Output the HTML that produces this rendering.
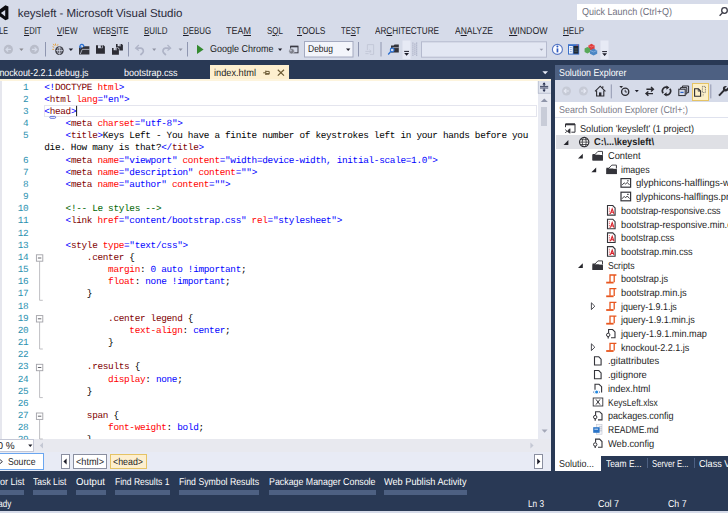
<!DOCTYPE html>
<html><head><meta charset="utf-8"><title>keysleft - Microsoft Visual Studio</title>
<style>
*{margin:0;padding:0;box-sizing:border-box}
html,body{text-rendering:geometricPrecision;width:728px;height:513px;overflow:hidden;background:#d6dbe9;font-family:"Liberation Sans",sans-serif;color:#1e1e1e}
.a{position:absolute;white-space:pre}
.t u{text-decoration:underline;text-underline-offset:1px}
.c{font-family:"Liberation Mono",monospace;font-size:9.4px;letter-spacing:-0.311px;line-height:12.15px;height:12.15px;color:#000}
.ln{color:#2b91af;left:0;width:28.3px;text-align:right}
.cd{left:44.3px}
.b{color:#00f}.r{color:#f00}.m{color:#800000}.g{color:#006400}
svg{position:absolute;overflow:visible}
</style></head><body>
<div class="a" style="left:0;top:0;width:728px;height:60px;background:#d6dbe9"></div>
<div class="a" style="left:577px;top:4px;width:151px;height:16px;background:#fff"></div>
<div class="a" style="left:0;top:59.7px;width:728px;height:453px;background:#293955"></div>
<div class="a" style="left:0;top:511.4px;width:728px;height:2px;background:#d6dbe9"></div>
<!-- editor -->
<div class="a" style="left:0;top:79px;width:551px;height:391.7px;background:#fff"></div>
<div class="a" style="left:0;top:79px;width:2px;height:360px;background:#e6e7ee"></div>
<div class="a" style="left:210px;top:65px;width:79px;height:14px;background:#fdefcf"></div>
<div class="a" style="left:43.5px;top:105.4px;width:493px;height:11.4px;border:1px solid #e4e5ee"></div>
<div class="a" style="left:0;top:79px;width:551px;height:1.8px;background:#fdf4dd"></div>
<!-- vscroll -->
<div class="a" style="left:538px;top:81px;width:13px;height:358px;background:#e8eaf2"></div>
<div class="a" style="left:541.2px;top:107px;width:6.2px;height:19px;background:#c8ccd8"></div>
<!-- hscroll row -->
<div class="a" style="left:0;top:439px;width:551px;height:13px;background:#e8e9ef"></div>
<div class="a" style="left:0;top:439px;width:34px;height:13px;background:#fff;border:1px solid #c5c8d6;border-left:0"></div>
<!-- source row -->
<div class="a" style="left:0;top:452px;width:551px;height:18.7px;background:#e8ebf5"></div>
<div class="a" style="left:-1px;top:453.4px;width:44.8px;height:16.2px;background:#fff;border:1.2px solid #6aa6f0"></div>
<div class="a" style="left:60.5px;top:454px;width:9.5px;height:15px;background:#fff;border:1px solid #8a8fa0"></div>
<div class="a" style="left:73px;top:454px;width:34px;height:15px;background:#fff;border:1px solid #8a8fa0"></div>
<div class="a" style="left:109.5px;top:454px;width:37px;height:15px;background:#fdefcf;border:1px solid #e5c365"></div>
<div class="a" style="left:534px;top:454px;width:9px;height:15px;background:#fff;border:1px solid #8a8fa0"></div>
<!-- solution explorer -->
<div class="a" style="left:555px;top:65px;width:173px;height:15px;background:#4d6082"></div>
<div class="a" style="left:555px;top:80px;width:173px;height:22px;background:#d6dbe9"></div>
<div class="a" style="left:555.2px;top:102px;width:172.8px;height:353.8px;background:#fff"></div>
<div class="a" style="left:555px;top:117px;width:173px;height:1px;background:#dfe2ee"></div>
<div class="a" style="left:555.5px;top:134.8px;width:172.5px;height:13.9px;background:#dfe0e5"></div>
<div class="a" style="left:691.5px;top:83px;width:17px;height:17.5px;background:#fdf0c8;border:1px solid #e5c365"></div>
<div class="a" style="left:555.2px;top:455px;width:45.8px;height:15.6px;background:#fff"></div>
<div class="a" style="left:647px;top:458px;width:1px;height:10px;background:#4d6082"></div>
<div class="a" style="left:694px;top:458px;width:1px;height:10px;background:#4d6082"></div>
<svg class="a" style="left:0;top:0" width="728" height="513" viewBox="0 0 728 513">
<!-- VS logo -->
<path d="M-3,11.6 L5.4,5.3 L8.4,6.6 L8.4,19 L5.4,20.3 L-3,14.2 Z M0.9,13.1 L5.2,9.9 L5.2,16.4 Z" fill="#0c0c10" fill-rule="evenodd"/>
<!-- quick launch magnifier -->
<g stroke="#3a3a46" stroke-width="1.3" fill="none"><circle cx="724.5" cy="10.5" r="2.8"/><path d="M722.6,12.6 L719.6,15.8"/></g>
<!-- toolbar: back / fwd -->
<g id="tb-nav">
<circle cx="8.4" cy="49.4" r="4.6" fill="#b9bdca"/><path d="M10.9,49.4 H6.2 M8.2,47.3 L6,49.4 L8.2,51.5" stroke="#d6dbe9" stroke-width="1.1" fill="none"/>
<path d="M19.3,48.6 h4.2 l-2.1,2.3 z" fill="#8a8a90"/>
<circle cx="34.4" cy="49.4" r="4.6" fill="#b9bdca"/><path d="M31.9,49.4 H36.6 M34.6,47.3 L36.8,49.4 L34.6,51.5" stroke="#d6dbe9" stroke-width="1.1" fill="none"/>
</g>
<g stroke="#8f96b0" stroke-width="1"><path d="M45.5,42 V56.5"/><path d="M128.5,42 V56.5"/><path d="M187.5,42 V56.5"/><path d="M358.5,42 V56.5"/><path d="M381,42 V56.5"/></g>
<!-- new web site -->
<g><circle cx="59.4" cy="50.6" r="4.3" fill="#404048"/><path d="M59.4,47 V54.2 M55.8,50.6 H63 " stroke="#d6dbe9" stroke-width="0.8"/><ellipse cx="59.4" cy="50.6" rx="1.9" ry="3.4" fill="none" stroke="#d6dbe9" stroke-width="0.7"/>
<path d="M55.5,43.6 V45.4 M52.6,46.6 L54.2,47.4 M53.2,43.9 L54.4,45.6 M58,44.3 L56.9,45.8 M52.4,49.4 H54" stroke="#e79a28" stroke-width="0.9"/></g>
<path d="M68.7,48.6 h4.4 l-2.2,2.4 z" fill="#1e1e2a"/>
<!-- open -->
<g><path d="M79,54.6 V47.4 H82.5 L83.5,46.2 H89.4 V54.6 Z" fill="#33333a"/><path d="M80.3,54 L82.2,49.4 H89.6" stroke="#d6dbe9" stroke-width="0.7" fill="none"/>
<path d="M80.4,47.6 A1.9,1.9 0 1 1 83.6,47" stroke="#2a6fd0" stroke-width="1.3" fill="none"/><path d="M79,46.6 L80.5,48.9 L82,46.8 Z" fill="#2a6fd0"/></g>
<!-- save -->
<g><path d="M96,45.2 H103.6 L104.9,46.5 V53.8 H96 Z" fill="#2c2c34"/><rect x="98" y="45.2" width="4.6" height="3" fill="#d6dbe9"/><rect x="100.8" y="45.6" width="1.2" height="2.1" fill="#2c2c34"/></g>
<!-- save all -->
<g><path d="M116,44 H121.8 L122.9,45.1 V50.6 H116 Z" fill="#2c2c34"/><rect x="117.6" y="44" width="3.4" height="2.2" fill="#d6dbe9"/><rect x="119.7" y="44.3" width="0.9" height="1.5" fill="#2c2c34"/>
<path d="M111.4,47.4 H118.2 L119.4,48.6 V55 H111.4 Z" fill="#d6dbe9"/>
<path d="M112,48 H117.8 L118.9,49.1 V54.7 H112 Z" fill="#2c2c34"/><rect x="113.6" y="48" width="3.4" height="2.2" fill="#d6dbe9"/><rect x="115.7" y="48.3" width="0.9" height="1.5" fill="#2c2c34"/></g>
<!-- undo / redo (disabled) -->
<g fill="none" stroke="#aeb3c6" stroke-width="1.7"><path d="M136.5,48.2 H141 A2.9,2.9 0 0 1 142.6,53 L140.4,55"/><path d="M138.8,45 L135.6,48.2 L138.8,50.6" stroke-width="1.2"/>
<path d="M169.8,48.2 H165.3 A2.9,2.9 0 0 0 163.7,53 L165.9,55"/><path d="M167.5,45 L170.7,48.2 L167.5,50.6" stroke-width="1.2"/></g>
<path d="M152.2,48.6 h4 l-2,2.3 z" fill="#9094a4"/><path d="M178.6,48.6 h4 l-2,2.3 z" fill="#9094a4"/>
<!-- play -->
<path d="M197,44.7 L203.6,49.4 L197,54.1 Z" fill="#348a30"/>
<path d="M278,48.6 h4.2 l-2.1,2.4 z" fill="#1e1e2a"/>
<!-- browser icon -->
<g><rect x="290.6" y="46.2" width="7.4" height="6.6" fill="none" stroke="#3a3a44" stroke-width="1"/><rect x="290.6" y="45.9" width="7.4" height="1.4" fill="#3a3a44"/><circle cx="291.6" cy="51.2" r="2.7" fill="#7c7e88" stroke="#d6dbe9" stroke-width="0.6"/><circle cx="290.9" cy="50.6" r="1" fill="#b8bcc8"/></g>
<!-- Debug combo -->
<rect x="304.5" y="41.5" width="48.5" height="15.5" fill="#f3f5fb" stroke="#a4aac0" stroke-width="1"/>
<path d="M346,48.6 h4.4 l-2.2,2.4 z" fill="#1e1e2a"/>
<!-- disabled doc icon -->
<g fill="none" stroke="#c2c6d6" stroke-width="0.9"><path d="M367.4,50 V44.6 H373.6 V54.4 H370"/><path d="M365.4,51.4 H371 M369.4,49.8 L371.2,51.4 L369.4,53 M365.4,53.6 H368.6"/></g>
<!-- find in files -->
<g><path d="M391,52.6 V45.6 H393.6 L394.6,44.4 H398.8 V52.6 Z" fill="#33333a"/><path d="M392.6,47.6 H398.8" stroke="#d6dbe9" stroke-width="0.6"/>
<circle cx="392.2" cy="50" r="1.9" fill="#d6dbe9" stroke="#2a6fd0" stroke-width="1.1"/><path d="M390.8,51.6 L388.2,54.4" stroke="#2a6fd0" stroke-width="1.4"/></g>
<!-- overflow 1 -->
<rect x="402.5" y="40.5" width="8" height="18.5" fill="#e7eaf5"/>
<path d="M404.2,51.4 h4.8" stroke="#1e1e2a" stroke-width="1"/><path d="M404.2,53 h4.8 l-2.4,2.7 z" fill="#1e1e2a"/>
<!-- grip -->
<g fill="#9298b0"><rect x="412.4" y="42.6" width="1" height="1"/><rect x="414.4" y="43.6" width="1" height="1"/><rect x="416.2" y="42.6" width="1" height="1"/>
<rect x="412.4" y="44.6" width="1" height="1"/><rect x="414.4" y="45.6" width="1" height="1"/><rect x="416.2" y="44.6" width="1" height="1"/>
<rect x="412.4" y="46.6" width="1" height="1"/><rect x="414.4" y="47.6" width="1" height="1"/><rect x="416.2" y="46.6" width="1" height="1"/>
<rect x="412.4" y="48.6" width="1" height="1"/><rect x="414.4" y="49.6" width="1" height="1"/><rect x="416.2" y="48.6" width="1" height="1"/>
<rect x="412.4" y="50.6" width="1" height="1"/><rect x="414.4" y="51.6" width="1" height="1"/><rect x="416.2" y="50.6" width="1" height="1"/>
<rect x="412.4" y="52.6" width="1" height="1"/><rect x="414.4" y="53.6" width="1" height="1"/><rect x="416.2" y="52.6" width="1" height="1"/>
<rect x="412.4" y="54.6" width="1" height="1"/><rect x="416.2" y="54.6" width="1" height="1"/></g>
<!-- empty combo -->
<rect x="421.5" y="41.8" width="125" height="15.4" fill="#e3e7f3" stroke="#b5bace" stroke-width="1"/>
<path d="M539.6,48.8 h3.6 l-1.8,2 z" fill="#9a9eb0"/>
<!-- info -->
<circle cx="557.4" cy="49.4" r="5" fill="#fdfdff" stroke="#5878c4" stroke-width="1.1"/><rect x="556.6" y="48.4" width="1.7" height="4" fill="#2c58c0"/><circle cx="557.4" cy="46.6" r="1" fill="#2c58c0"/>
<!-- window icon -->
<g><rect x="568" y="44.2" width="11.2" height="10.4" fill="#3a70c8"/><rect x="569" y="46" width="3.8" height="7.6" fill="#f2f5fc"/><rect x="573.6" y="46" width="4.8" height="7.6" fill="#23282e"/><path d="M569.8,47.6 h2 M569.8,49.6 h2 M569.8,51.6 h2" stroke="#7c9cd8" stroke-width="0.8"/><path d="M574.4,49 h3.2 M574.4,51.2 h3.2" stroke="#4a6a78" stroke-width="0.8"/><rect x="576.4" y="44.8" width="1.6" height="0.8" fill="#e04848"/></g>
<!-- cubes -->
<g><path d="M588.4,45.4 L591.4,43.8 L594.6,45.4 V49.4 L591.4,51 L588.4,49.4 Z" fill="#e03c3c"/><path d="M588.4,45.4 L591.4,47 L594.6,45.4" stroke="#f08a8a" stroke-width="0.6" fill="none"/>
<path d="M584.6,48.4 L587.4,47 L590.2,48.4 V52 L587.4,53.4 L584.6,52 Z" fill="#58a858"/>
<path d="M590,50.4 L593.6,48.6 L597.2,50.4 V53.8 L593.6,55.4 L590,53.8 Z" fill="#4a86c4"/><path d="M590,50.4 L593.6,52 L597.2,50.4" stroke="#9cc0e8" stroke-width="0.6" fill="none"/></g>
<!-- overflow 2 -->
<rect x="600.5" y="40.5" width="8" height="18.5" fill="#e7eaf5"/>
<path d="M602.2,51.6 h4.8" stroke="#1e1e2a" stroke-width="1"/><path d="M602.2,53.2 h4.8 l-2.4,2.7 z" fill="#1e1e2a"/>
</svg>
<svg class="a" style="left:0;top:0" width="728" height="513" viewBox="0 0 728 513">
<g stroke="#6b5a34" stroke-width="1" fill="none"><path d="M263.2,72.8 H265.8 M265.8,70.6 V75 M265.8,71.4 H269.2 V74.2 H265.8 M265.8,73.6 H269.2"/><path d="M277.8,69.8 L284,75.6 M284,69.8 L277.8,75.6" stroke-width="1.2"/></g>
<path d="M542.4,71.3 h5.6 l-2.8,3 z" fill="#e8ecf8"/>
<rect x="538" y="81" width="12.7" height="12.5" fill="#dfe3ee"/><path d="M538,93.3 H550.7 M538.3,81 V93.5" stroke="#b4bacb" stroke-width="0.8"/>
<g stroke="#2a3250" fill="none"><path d="M540,86.4 H548.2 M540,88 H548.2" stroke-width="0.9"/><path d="M544.1,83 V86 M544.1,88.4 V91.2" stroke-width="1.1"/></g><path d="M542.4,84.4 L544.1,82.2 L545.8,84.4 Z M542.4,89.8 L544.1,92 L545.8,89.8 Z" fill="#2a3250"/>
<path d="M540.8,102 L544.3,98.4 L547.8,102 Z" fill="#9096aa"/>
<path d="M541.6,429.4 L544.6,432.8 L547.6,429.4 Z" fill="#a4a8b8"/>
<path d="M43,442.4 L39.8,445.4 L43,448.4 Z" fill="#c4c8d4"/>
<path d="M530.4,442.4 L533.6,445.4 L530.4,448.4 Z" fill="#c4c8d4"/>
<path d="M28.2,444.6 h4.2 l-2.1,2.3 z" fill="#1e1e2a"/>
<path d="M66.6,458.6 L63.4,461.6 L66.6,464.6 Z" fill="#1e1e2a"/>
<path d="M537.2,458.6 L540.4,461.6 L537.2,464.6 Z" fill="#1e1e2a"/>
<path d="M0,459.6 L2.4,461.6 L0,463.6" stroke="#3a3a44" stroke-width="1" fill="none"/>
<path d="M39.6,261.3 V300.3 H42.8" stroke="#b8b8bc" stroke-width="0.9" fill="none"/>
<rect x="36.4" y="254.8" width="6.4" height="6.4" fill="#fff" stroke="#a2a2a8" stroke-width="0.9"/><path d="M37.9,258.0 h3.4" stroke="#55555c" stroke-width="0.9"/>
<path d="M39.6,322.1 V349.0 H42.8" stroke="#b8b8bc" stroke-width="0.9" fill="none"/>
<rect x="36.4" y="315.6" width="6.4" height="6.4" fill="#fff" stroke="#a2a2a8" stroke-width="0.9"/><path d="M37.9,318.8 h3.4" stroke="#55555c" stroke-width="0.9"/>
<path d="M39.6,370.8 V397.6 H42.8" stroke="#b8b8bc" stroke-width="0.9" fill="none"/>
<rect x="36.4" y="364.3" width="6.4" height="6.4" fill="#fff" stroke="#a2a2a8" stroke-width="0.9"/><path d="M37.9,367.5 h3.4" stroke="#55555c" stroke-width="0.9"/>
<path d="M39.6,419.5 V439.0 H42.8" stroke="#b8b8bc" stroke-width="0.9" fill="none"/>
<rect x="36.4" y="413.0" width="6.4" height="6.4" fill="#fff" stroke="#a2a2a8" stroke-width="0.9"/><path d="M37.9,416.2 h3.4" stroke="#55555c" stroke-width="0.9"/>
<rect x="49.8" y="116.4" width="5.8" height="1.9" rx="0.9" fill="#fff" stroke="#3a4ed0" stroke-width="0.8"/>
<path d="M76.6,105.8 V116.2" stroke="#000" stroke-width="0.9"/>
<circle cx="566.5" cy="91" r="4.5" fill="#c6cad6"/><path d="M568.9,91 H564.4 M566.3,89 L564.2,91 L566.3,93" stroke="#e6e9f4" stroke-width="1.1" fill="none"/>
<circle cx="583.4" cy="91" r="4.5" fill="#c6cad6"/><path d="M581,91 H585.5 M583.6,89 L585.7,91 L583.6,93" stroke="#e6e9f4" stroke-width="1.1" fill="none"/>
<g stroke="#2a2a30" fill="none" stroke-width="1.1"><path d="M595,91.4 L600.2,86.2 L605.4,91.4"/><path d="M596.6,90.4 V96 H603.8 V90.4"/><path d="M602.8,88 V86.2"/></g><rect x="599" y="92.4" width="2.4" height="3.6" fill="#2a2a30"/>
<path d="M611.3,84.4 V98.4 M710.8,84.4 V98.4" stroke="#9298b0" stroke-width="1"/>
<circle cx="625.2" cy="91.8" r="3.6" fill="none" stroke="#2a2a30" stroke-width="1.3"/><path d="M625.2,89.8 V92 H627.2" stroke="#2a2a30" stroke-width="0.9" fill="none"/><path d="M619.4,86 h3.6 l-1.8,2.2 z" fill="#2a2a30"/>
<path d="M634.8,90 h4 l-2,2.3 z" fill="#1e1e2a"/>
<g stroke="#2a2a30" stroke-width="1.4" fill="none"><path d="M646.4,89.2 H653.2 M651,87 L653.4,89.2 L651,91.4"/><path d="M653,93.6 H646.2 M648.4,91.4 L646,93.6 L648.4,95.8"/></g>
<g stroke="#2a2a30" stroke-width="1.6" fill="none"><path d="M663.2,93.2 A3.7,3.7 0 0 1 667.4,87.4"/><path d="M669.8,88.8 A3.7,3.7 0 0 1 665.6,94.6"/></g><path d="M666.4,85.6 L669.4,87.6 L666.4,89.8 Z M666.6,92.2 L663.6,94.4 L666.6,96.6 Z" fill="#2a2a30"/>
<g fill="none" stroke="#2a2a30" stroke-width="1"><path d="M682.4,87.4 V86 H688.6 V92.6 H687.2"/><path d="M680.6,89 V87.6 H686.8 V94 H685.6"/><rect x="678.8" y="89.2" width="6.4" height="6.4"/></g><path d="M680.4,92.4 h3.2" stroke="#2a62c8" stroke-width="1.2"/>
<path d="M694.6,88.8 H698.4 L700.6,91 V96.2 H694.6 Z" fill="none" stroke="#2a2a30" stroke-width="1.1"/><path d="M698.2,89 V91.2 H700.4" fill="none" stroke="#2a2a30" stroke-width="0.7"/><path d="M702.4,86.4 H705.4 V92.6 H702.4 Z" fill="none" stroke="#55555e" stroke-width="0.8" stroke-dasharray="1,0.8"/><path d="M703.2,94 V96 H701.8" stroke="#77777e" stroke-width="0.7" fill="none" stroke-dasharray="0.8,0.8"/>
<path d="M719,95.6 L724,90.4" stroke="#2a2a30" stroke-width="2" fill="none"/><circle cx="725.6" cy="88.8" r="2.7" fill="#2a2a30"/><path d="M725.4,88.8 L729,85.2" stroke="#d6dbe9" stroke-width="1.6"/>
<path d="M565.5,127.2 V124.0 H575.0 V132.2 H571.4" fill="none" stroke="#34343a" stroke-width="1"/><path d="M565.5,124.4 H575.0" stroke="#34343a" stroke-width="1.8"/>
<path d="M565.0,129.8 L567.0,131.2 L569.2,128.8 L570.4,128.4 V133.6 L569.2,133.2 Z" fill="#34343a"/>
<path d="M565.2,133.0 L567.0,131.2 L565.2,129.6" fill="none" stroke="#34343a" stroke-width="0.9"/>
<circle cx="584.2" cy="142.1" r="4.7" fill="#fff" stroke="#2e2e34" stroke-width="1.1"/><ellipse cx="584.2" cy="142.1" rx="2" ry="4.7" fill="none" stroke="#2e2e34" stroke-width="0.8"/><path d="M579.6,142.1 H588.8 M580.4,139.7 H588.0 M580.4,144.5 H588.0" stroke="#2e2e34" stroke-width="0.8"/>
<path d="M568.4,140.1 V144.9 H563.6 Z" fill="#26262c"/>
<path d="M592.5,160.2 V154.0 H602.9 V152.0 H602.9 L602.9,152.0 H602.9 Z" fill="#34343a"/>
<path d="M592.5,155.0 H602.9 V160.4 H592.5 Z" fill="#34343a"/>
<path d="M594.7,154.8 L597.9,151.4 H602.5 V154.8" fill="#fff" stroke="#34343a" stroke-width="0.9"/>
<path d="M592.5,160.4 L594.3,156.0 H602.9 V160.4 Z" fill="#34343a"/>
<path d="M582.8,153.8 V158.6 H578.0 Z" fill="#26262c"/>
<path d="M606.4,173.9 V167.7 H616.8 V165.7 H616.8 L616.8,165.7 H616.8 Z" fill="#34343a"/>
<path d="M606.4,168.7 H616.8 V174.1 H606.4 Z" fill="#34343a"/>
<path d="M608.6,168.5 L611.8,165.1 H616.4 V168.5" fill="#fff" stroke="#34343a" stroke-width="0.9"/>
<path d="M606.4,174.1 L608.2,169.7 H616.8 V174.1 Z" fill="#34343a"/>
<path d="M596.2,167.5 V172.3 H591.4 Z" fill="#26262c"/>
<rect x="621.0" y="178.6" width="9.6" height="8.6" fill="#fff" stroke="#34343a" stroke-width="1.2"/><path d="M622.0,185.2 L624.2,182.8 L625.6,184.2 L627.2,182.4 L629.6,185.0" fill="none" stroke="#34343a" stroke-width="0.9"/><rect x="627.2" y="180.2" width="1.4" height="1.2" fill="#34343a"/>
<rect x="621.0" y="192.2" width="9.6" height="8.6" fill="#fff" stroke="#34343a" stroke-width="1.2"/><path d="M622.0,198.8 L624.2,196.4 L625.6,197.8 L627.2,196.0 L629.6,198.6" fill="none" stroke="#34343a" stroke-width="0.9"/><rect x="627.2" y="193.8" width="1.4" height="1.2" fill="#34343a"/>
<path d="M607.5,205.5 H612.8 L615.1,207.9 V215.1 H607.5 Z" fill="#fff" stroke="#34343a" stroke-width="1.1"/>
<path d="M610.4,213.9 L612.2,208.9 L614.0,213.9 M611.0,212.3 H613.4" fill="none" stroke="#d8232c" stroke-width="1.1"/><path d="M609.4,207.7 V213.9" stroke="#d8232c" stroke-width="0.8" stroke-dasharray="0.9,0.9"/>
<path d="M607.5,219.2 H612.8 L615.1,221.6 V228.8 H607.5 Z" fill="#fff" stroke="#34343a" stroke-width="1.1"/>
<path d="M610.4,227.6 L612.2,222.6 L614.0,227.6 M611.0,226.0 H613.4" fill="none" stroke="#d8232c" stroke-width="1.1"/><path d="M609.4,221.4 V227.6" stroke="#d8232c" stroke-width="0.8" stroke-dasharray="0.9,0.9"/>
<path d="M607.5,232.9 H612.8 L615.1,235.3 V242.5 H607.5 Z" fill="#fff" stroke="#34343a" stroke-width="1.1"/>
<path d="M610.4,241.3 L612.2,236.3 L614.0,241.3 M611.0,239.7 H613.4" fill="none" stroke="#d8232c" stroke-width="1.1"/><path d="M609.4,235.1 V241.3" stroke="#d8232c" stroke-width="0.8" stroke-dasharray="0.9,0.9"/>
<path d="M607.5,246.6 H612.8 L615.1,249.0 V256.2 H607.5 Z" fill="#fff" stroke="#34343a" stroke-width="1.1"/>
<path d="M610.4,255.0 L612.2,250.0 L614.0,255.0 M611.0,253.4 H613.4" fill="none" stroke="#d8232c" stroke-width="1.1"/><path d="M609.4,248.8 V255.0" stroke="#d8232c" stroke-width="0.8" stroke-dasharray="0.9,0.9"/>
<path d="M592.5,269.7 V263.5 H602.9 V261.5 H602.9 L602.9,261.5 H602.9 Z" fill="#34343a"/>
<path d="M592.5,264.5 H602.9 V269.9 H592.5 Z" fill="#34343a"/>
<path d="M594.7,264.3 L597.9,260.9 H602.5 V264.3" fill="#fff" stroke="#34343a" stroke-width="0.9"/>
<path d="M592.5,269.9 L594.3,265.5 H602.9 V269.9 Z" fill="#34343a"/>
<path d="M582.8,263.3 V268.1 H578.0 Z" fill="#26262c"/>
<path d="M616.4,275.0 H610.0 V282.0" fill="none" stroke="#e8561e" stroke-width="1.3"/><path d="M606.2,282.6 H613.6" stroke="#e8561e" stroke-width="1.8"/><path d="M614.2,275.0 V282.2" stroke="#e8561e" stroke-width="1.3"/>
<path d="M616.4,288.7 H610.0 V295.7" fill="none" stroke="#e8561e" stroke-width="1.3"/><path d="M606.2,296.3 H613.6" stroke="#e8561e" stroke-width="1.8"/><path d="M614.2,288.7 V295.9" stroke="#e8561e" stroke-width="1.3"/>
<path d="M616.4,302.4 H610.0 V309.4" fill="none" stroke="#e8561e" stroke-width="1.3"/><path d="M606.2,310.0 H613.6" stroke="#e8561e" stroke-width="1.8"/><path d="M614.2,302.4 V309.6" stroke="#e8561e" stroke-width="1.3"/>
<path d="M591.4,302.8 L594.8,306.2 L591.4,309.6 Z" fill="#fff" stroke="#3a3a42" stroke-width="0.9"/>
<path d="M616.4,316.1 H610.0 V323.1" fill="none" stroke="#e8561e" stroke-width="1.3"/><path d="M606.2,323.7 H613.6" stroke="#e8561e" stroke-width="1.8"/><path d="M614.2,316.1 V323.3" stroke="#e8561e" stroke-width="1.3"/>
<path d="M608.6,332.9 V329.5 H612.6 L615.0,331.9 V337.7 H611.0" fill="#fff" stroke="#34343a" stroke-width="1.1"/>
<circle cx="608.2" cy="334.9" r="1.7" fill="#fff" stroke="#34343a" stroke-width="1"/><path d="M608.2,336.3 V338.5" stroke="#34343a" stroke-width="1.2"/>
<path d="M616.4,343.4 H610.0 V350.4" fill="none" stroke="#e8561e" stroke-width="1.3"/><path d="M606.2,351.0 H613.6" stroke="#e8561e" stroke-width="1.8"/><path d="M614.2,343.4 V350.6" stroke="#e8561e" stroke-width="1.3"/>
<path d="M591.4,343.8 L594.8,347.2 L591.4,350.6 Z" fill="#fff" stroke="#3a3a42" stroke-width="0.9"/>
<path d="M594.5,356.8 H598.8 L601.1,359.2 V365.0 H594.5 Z" fill="#fff" stroke="#34343a" stroke-width="1.1"/>
<path d="M594.5,370.5 H598.8 L601.1,372.9 V378.7 H594.5 Z" fill="#fff" stroke="#34343a" stroke-width="1.1"/>
<path d="M595.0,389.7 V384.3 H599.0 L601.6,386.7 V392.5" fill="#fff" stroke="#34343a" stroke-width="1.1"/>
<circle cx="596.6" cy="392.1" r="1.5" fill="#1e86e0"/><path d="M594.4,391.1 l-1.2,1 l1.2,1 M598.8,391.1 l1.2,1 l-1.2,1" stroke="#3a6ab0" stroke-width="0.6" fill="none"/>
<rect x="593.2" y="398.0" width="9.6" height="8" fill="#fff" stroke="#34343a" stroke-width="0.9"/><path d="M596.0,399.4 L600.0,404.6 M600.0,399.4 L596.0,404.6" stroke="#34343a" stroke-width="1"/>
<path d="M595.6,415.1 V411.7 H599.6 L602.0,414.1 V419.9 H598.0" fill="#fff" stroke="#34343a" stroke-width="1.1"/>
<circle cx="595.2" cy="417.1" r="1.7" fill="#fff" stroke="#34343a" stroke-width="1"/><path d="M595.2,418.5 V420.7" stroke="#34343a" stroke-width="1.2"/>
<rect x="596.4" y="424.6" width="5.6" height="9.6" fill="#f4f6fa" stroke="#c0c4d0" stroke-width="0.6"/><path d="M599.0,426.8 h3 M599.0,428.8 h3 M599.0,430.8 h3" stroke="#a8aebc" stroke-width="0.7"/><rect x="593.2" y="427.2" width="6.4" height="5.6" fill="#2a74c8"/><path d="M594.4,429.2 h3.6" stroke="#fff" stroke-width="0.8"/>
<path d="M595.6,442.5 V439.1 H599.6 L602.0,441.5 V447.3 H598.0" fill="#fff" stroke="#34343a" stroke-width="1.1"/>
<circle cx="595.2" cy="444.5" r="1.7" fill="#fff" stroke="#34343a" stroke-width="1"/><path d="M595.2,445.9 V448.1" stroke="#34343a" stroke-width="1.2"/>
</svg>
<div class="a" style="left:0;top:79px;width:537px;height:360px;overflow:hidden"><div class="a" style="left:0;top:-79px"><div class="a c ln" style="top:81.52px">1</div>
<div class="a c cd" style="top:81.52px"><span class="b">&lt;!</span><span class="m">DOCTYPE</span><span class="r"> html</span><span class="b">&gt;</span></div>
<div class="a c ln" style="top:93.69px">2</div>
<div class="a c cd" style="top:93.69px"><span class="b">&lt;</span><span class="m">html</span><span class="r"> lang</span><span class="b">="en"</span><span class="b">&gt;</span></div>
<div class="a c ln" style="top:105.86px">3</div>
<div class="a c cd" style="top:105.86px"><span class="b">&lt;</span><span class="m">head</span><span class="b">&gt;</span></div>
<div class="a c ln" style="top:118.02px">4</div>
<div class="a c cd" style="top:118.02px">    <span class="b">&lt;</span><span class="m">meta</span><span class="r"> charset</span><span class="b">="utf-8"</span><span class="b">&gt;</span></div>
<div class="a c ln" style="top:130.19px">5</div>
<div class="a c cd" style="top:130.19px">    <span class="b">&lt;</span><span class="m">title</span><span class="b">&gt;</span>Keys Left - You have a finite number of keystrokes left in your hands before you</div>
<div class="a c cd" style="top:142.36px">die. How many is that?<span class="b">&lt;/</span><span class="m">title</span><span class="b">&gt;</span></div>
<div class="a c ln" style="top:154.53px">6</div>
<div class="a c cd" style="top:154.53px">    <span class="b">&lt;</span><span class="m">meta</span><span class="r"> name</span><span class="b">="viewport"</span><span class="r"> content</span><span class="b">="width=device-width, initial-scale=1.0"</span><span class="b">&gt;</span></div>
<div class="a c ln" style="top:166.70px">7</div>
<div class="a c cd" style="top:166.70px">    <span class="b">&lt;</span><span class="m">meta</span><span class="r"> name</span><span class="b">="description"</span><span class="r"> content</span><span class="b">=""</span><span class="b">&gt;</span></div>
<div class="a c ln" style="top:178.87px">8</div>
<div class="a c cd" style="top:178.87px">    <span class="b">&lt;</span><span class="m">meta</span><span class="r"> name</span><span class="b">="author"</span><span class="r"> content</span><span class="b">=""</span><span class="b">&gt;</span></div>
<div class="a c ln" style="top:191.04px">9</div>
<div class="a c ln" style="top:203.22px">10</div>
<div class="a c cd" style="top:203.22px">    <span class="g">&lt;!-- Le styles --&gt;</span></div>
<div class="a c ln" style="top:215.38px">11</div>
<div class="a c cd" style="top:215.38px">    <span class="b">&lt;</span><span class="m">link</span><span class="r"> href</span><span class="b">="content/bootstrap.css"</span><span class="r"> rel</span><span class="b">="stylesheet"</span><span class="b">&gt;</span></div>
<div class="a c ln" style="top:227.55px">12</div>
<div class="a c ln" style="top:239.72px">13</div>
<div class="a c cd" style="top:239.72px">    <span class="b">&lt;</span><span class="m">style</span><span class="r"> type</span><span class="b">="text/css"</span><span class="b">&gt;</span></div>
<div class="a c ln" style="top:251.90px">14</div>
<div class="a c cd" style="top:251.90px"><span class="m">        .center</span> {</div>
<div class="a c ln" style="top:264.06px">15</div>
<div class="a c cd" style="top:264.06px"><span class="r">            margin</span>:<span class="b"> 0 auto !important</span>;</div>
<div class="a c ln" style="top:276.24px">16</div>
<div class="a c cd" style="top:276.24px"><span class="r">            float</span>:<span class="b"> none !important</span>;</div>
<div class="a c ln" style="top:288.41px">17</div>
<div class="a c cd" style="top:288.41px">        }</div>
<div class="a c ln" style="top:300.57px">18</div>
<div class="a c ln" style="top:312.75px">19</div>
<div class="a c cd" style="top:312.75px"><span class="m">            .center legend</span> {</div>
<div class="a c ln" style="top:324.92px">20</div>
<div class="a c cd" style="top:324.92px"><span class="r">                text-align</span>:<span class="b"> center</span>;</div>
<div class="a c ln" style="top:337.08px">21</div>
<div class="a c cd" style="top:337.08px">            }</div>
<div class="a c ln" style="top:349.26px">22</div>
<div class="a c ln" style="top:361.43px">23</div>
<div class="a c cd" style="top:361.43px"><span class="m">        .results</span> {</div>
<div class="a c ln" style="top:373.59px">24</div>
<div class="a c cd" style="top:373.59px"><span class="r">            display</span>:<span class="b"> none</span>;</div>
<div class="a c ln" style="top:385.77px">25</div>
<div class="a c cd" style="top:385.77px">        }</div>
<div class="a c ln" style="top:397.94px">26</div>
<div class="a c ln" style="top:410.10px">27</div>
<div class="a c cd" style="top:410.10px"><span class="m">        span</span> {</div>
<div class="a c ln" style="top:422.28px">28</div>
<div class="a c cd" style="top:422.28px"><span class="r">            font-weight</span>:<span class="b"> bold</span>;</div>
<div class="a c ln" style="top:434.44px">29</div>
<div class="a c cd" style="top:434.44px">        }</div></div></div>
<div class="a" style="left:0.0px;top:490px;width:24.0px;height:5px;background:#4d6082"></div><div class="a" style="left:33.0px;top:490px;width:34.0px;height:5px;background:#4d6082"></div><div class="a" style="left:76.0px;top:490px;width:29.5px;height:5px;background:#4d6082"></div><div class="a" style="left:114.5px;top:490px;width:55.0px;height:5px;background:#4d6082"></div><div class="a" style="left:178.5px;top:490px;width:80.5px;height:5px;background:#4d6082"></div><div class="a" style="left:268.5px;top:490px;width:107.0px;height:5px;background:#4d6082"></div><div class="a" style="left:384.0px;top:490px;width:83.0px;height:5px;background:#4d6082"></div>
<div class="a t" id="t0" style="left:17.8px;top:6.07px;font-size:11.5px;line-height:16.10px;color:#2a2a3a;letter-spacing:-0.043px;">keysleft - Microsoft Visual Studio</div>
<div class="a t" id="t1" style="left:582.0px;top:6.03px;font-size:10.2px;line-height:14.28px;color:#70707e;transform:scaleX(0.8855);transform-origin:0 0;">Quick Launch (Ctrl+Q)</div>
<div class="a t" id="t2" style="left:-7.0px;top:25.03px;font-size:10.0px;line-height:14.00px;color:#1e1e2a;transform:scaleX(0.7101);transform-origin:0 0;"><u>F</u>ILE</div>
<div class="a t" id="t3" style="left:23.5px;top:25.03px;font-size:10.0px;line-height:14.00px;color:#1e1e2a;transform:scaleX(0.7682);transform-origin:0 0;"><u>E</u>DIT</div>
<div class="a t" id="t4" style="left:57.0px;top:25.03px;font-size:10.0px;line-height:14.00px;color:#1e1e2a;transform:scaleX(0.8020);transform-origin:0 0;"><u>V</u>IEW</div>
<div class="a t" id="t5" style="left:93.0px;top:25.03px;font-size:10.0px;line-height:14.00px;color:#1e1e2a;transform:scaleX(0.7886);transform-origin:0 0;">WEB<u>S</u>ITE</div>
<div class="a t" id="t6" style="left:143.5px;top:25.03px;font-size:10.0px;line-height:14.00px;color:#1e1e2a;transform:scaleX(0.7975);transform-origin:0 0;"><u>B</u>UILD</div>
<div class="a t" id="t7" style="left:182.5px;top:25.03px;font-size:10.0px;line-height:14.00px;color:#1e1e2a;transform:scaleX(0.7870);transform-origin:0 0;"><u>D</u>EBUG</div>
<div class="a t" id="t8" style="left:226.0px;top:25.03px;font-size:10.0px;line-height:14.00px;color:#1e1e2a;transform:scaleX(0.8994);transform-origin:0 0;">TEA<u>M</u></div>
<div class="a t" id="t9" style="left:266.5px;top:25.03px;font-size:10.0px;line-height:14.00px;color:#1e1e2a;transform:scaleX(0.7994);transform-origin:0 0;">S<u>Q</u>L</div>
<div class="a t" id="t10" style="left:297.0px;top:25.03px;font-size:10.0px;line-height:14.00px;color:#1e1e2a;transform:scaleX(0.8448);transform-origin:0 0;"><u>T</u>OOLS</div>
<div class="a t" id="t11" style="left:340.5px;top:25.03px;font-size:10.0px;line-height:14.00px;color:#1e1e2a;transform:scaleX(0.7628);transform-origin:0 0;">TE<u>S</u>T</div>
<div class="a t" id="t12" style="left:375.0px;top:25.03px;font-size:10.0px;line-height:14.00px;color:#1e1e2a;transform:scaleX(0.8166);transform-origin:0 0;">AR<u>C</u>HITECTURE</div>
<div class="a t" id="t13" style="left:455.0px;top:25.03px;font-size:10.0px;line-height:14.00px;color:#1e1e2a;transform:scaleX(0.8474);transform-origin:0 0;">A<u>N</u>ALYZE</div>
<div class="a t" id="t14" style="left:509.0px;top:25.03px;font-size:10.0px;line-height:14.00px;color:#1e1e2a;transform:scaleX(0.8769);transform-origin:0 0;"><u>W</u>INDOW</div>
<div class="a t" id="t15" style="left:563.0px;top:25.03px;font-size:10.0px;line-height:14.00px;color:#1e1e2a;transform:scaleX(0.8033);transform-origin:0 0;"><u>H</u>ELP</div>
<div class="a t" id="t16" style="left:210.0px;top:43.23px;font-size:10.0px;line-height:14.00px;color:#1e1e1e;transform:scaleX(0.8981);transform-origin:0 0;">Google Chrome</div>
<div class="a t" id="t17" style="left:307.7px;top:43.23px;font-size:10.0px;line-height:14.00px;color:#1e1e1e;transform:scaleX(0.8484);transform-origin:0 0;">Debug</div>
<div class="a t" id="t18" style="left:-5.5px;top:67.03px;font-size:10.0px;line-height:14.00px;color:#fff;transform:scaleX(0.8805);transform-origin:0 0;">knockout-2.2.1.debug.js</div>
<div class="a t" id="t19" style="left:124.0px;top:67.03px;font-size:10.0px;line-height:14.00px;color:#fff;transform:scaleX(0.8994);transform-origin:0 0;">bootstrap.css</div>
<div class="a t" id="t20" style="left:213.5px;top:67.03px;font-size:10.0px;line-height:14.00px;color:#1e1e1e;transform:scaleX(0.9215);transform-origin:0 0;">index.html</div>
<div class="a t" id="t21" style="left:558.6px;top:67.03px;font-size:10.0px;line-height:14.00px;color:#fff;transform:scaleX(0.8850);transform-origin:0 0;">Solution Explorer</div>
<div class="a t" id="t22" style="left:558.6px;top:104.33px;font-size:10.0px;line-height:14.00px;color:#7a7a88;transform:scaleX(0.8944);transform-origin:0 0;">Search Solution Explorer (Ctrl+;)</div>
<div class="a t" id="t23" style="left:580.4px;top:122.73px;font-size:10.0px;line-height:14.00px;color:#1e1e1e;transform:scaleX(0.9161);transform-origin:0 0;">Solution &#x27;keysleft&#x27; (1 project)</div>
<div class="a t" id="t24" style="left:594.0px;top:136.42px;font-size:10.0px;line-height:14.00px;color:#1e1e1e;font-weight:bold;transform:scaleX(0.9307);transform-origin:0 0;">C:\...\keysleft\</div>
<div class="a t" id="t25" style="left:607.8px;top:150.11px;font-size:10.0px;line-height:14.00px;color:#1e1e1e;transform:scaleX(0.9277);transform-origin:0 0;">Content</div>
<div class="a t" id="t26" style="left:621.4px;top:163.80px;font-size:10.0px;line-height:14.00px;color:#1e1e1e;transform:scaleX(0.8868);transform-origin:0 0;">images</div>
<div class="a t" id="t27" style="left:635.6px;top:177.49px;font-size:10.0px;line-height:14.00px;color:#1e1e1e;transform:scaleX(0.9594);transform-origin:0 0;">glyphicons-halflings-white.png</div>
<div class="a t" id="t28" style="left:635.6px;top:191.18px;font-size:10.0px;line-height:14.00px;color:#1e1e1e;transform:scaleX(0.9416);transform-origin:0 0;">glyphicons-halflings.png</div>
<div class="a t" id="t29" style="left:621.4px;top:204.87px;font-size:10.0px;line-height:14.00px;color:#1e1e1e;transform:scaleX(0.8959);transform-origin:0 0;">bootstrap-responsive.css</div>
<div class="a t" id="t30" style="left:621.4px;top:218.56px;font-size:10.0px;line-height:14.00px;color:#1e1e1e;transform:scaleX(0.9226);transform-origin:0 0;">bootstrap-responsive.min.css</div>
<div class="a t" id="t31" style="left:621.4px;top:232.25px;font-size:10.0px;line-height:14.00px;color:#1e1e1e;transform:scaleX(0.8960);transform-origin:0 0;">bootstrap.css</div>
<div class="a t" id="t32" style="left:621.4px;top:245.94px;font-size:10.0px;line-height:14.00px;color:#1e1e1e;transform:scaleX(0.9136);transform-origin:0 0;">bootstrap.min.css</div>
<div class="a t" id="t33" style="left:607.8px;top:259.64px;font-size:10.0px;line-height:14.00px;color:#1e1e1e;transform:scaleX(0.8671);transform-origin:0 0;">Scripts</div>
<div class="a t" id="t34" style="left:621.4px;top:273.32px;font-size:10.0px;line-height:14.00px;color:#1e1e1e;transform:scaleX(0.9090);transform-origin:0 0;">bootstrap.js</div>
<div class="a t" id="t35" style="left:621.4px;top:287.02px;font-size:10.0px;line-height:14.00px;color:#1e1e1e;transform:scaleX(0.9293);transform-origin:0 0;">bootstrap.min.js</div>
<div class="a t" id="t36" style="left:621.4px;top:300.70px;font-size:10.0px;line-height:14.00px;color:#1e1e1e;transform:scaleX(0.8884);transform-origin:0 0;">jquery-1.9.1.js</div>
<div class="a t" id="t37" style="left:621.4px;top:314.40px;font-size:10.0px;line-height:14.00px;color:#1e1e1e;transform:scaleX(0.9033);transform-origin:0 0;">jquery-1.9.1.min.js</div>
<div class="a t" id="t38" style="left:621.4px;top:328.08px;font-size:10.0px;line-height:14.00px;color:#1e1e1e;transform:scaleX(0.9134);transform-origin:0 0;">jquery-1.9.1.min.map</div>
<div class="a t" id="t39" style="left:621.4px;top:341.78px;font-size:10.0px;line-height:14.00px;color:#1e1e1e;transform:scaleX(0.9033);transform-origin:0 0;">knockout-2.2.1.js</div>
<div class="a t" id="t40" style="left:607.8px;top:355.46px;font-size:10.0px;line-height:14.00px;color:#1e1e1e;transform:scaleX(0.9397);transform-origin:0 0;">.gitattributes</div>
<div class="a t" id="t41" style="left:607.8px;top:369.16px;font-size:10.0px;line-height:14.00px;color:#1e1e1e;transform:scaleX(0.9431);transform-origin:0 0;">.gitignore</div>
<div class="a t" id="t42" style="left:607.8px;top:382.85px;font-size:10.0px;line-height:14.00px;color:#1e1e1e;transform:scaleX(0.9281);transform-origin:0 0;">index.html</div>
<div class="a t" id="t43" style="left:607.8px;top:396.54px;font-size:10.0px;line-height:14.00px;color:#1e1e1e;transform:scaleX(0.8435);transform-origin:0 0;">KeysLeft.xlsx</div>
<div class="a t" id="t44" style="left:607.8px;top:410.23px;font-size:10.0px;line-height:14.00px;color:#1e1e1e;transform:scaleX(0.9062);transform-origin:0 0;">packages.config</div>
<div class="a t" id="t45" style="left:607.8px;top:423.92px;font-size:10.0px;line-height:14.00px;color:#1e1e1e;transform:scaleX(0.8494);transform-origin:0 0;">README.md</div>
<div class="a t" id="t46" style="left:607.8px;top:437.61px;font-size:10.0px;line-height:14.00px;color:#1e1e1e;transform:scaleX(0.9269);transform-origin:0 0;">Web.config</div>
<div class="a t" id="t47" style="left:-12.5px;top:476.34px;font-size:10.0px;line-height:14.00px;color:#fff;transform:scaleX(0.8998);transform-origin:0 0;">Error List</div>
<div class="a t" id="t48" style="left:33.0px;top:476.34px;font-size:10.0px;line-height:14.00px;color:#fff;transform:scaleX(0.8610);transform-origin:0 0;">Task List</div>
<div class="a t" id="t49" style="left:76.0px;top:476.34px;font-size:10.0px;line-height:14.00px;color:#fff;transform:scaleX(0.9657);transform-origin:0 0;">Output</div>
<div class="a t" id="t50" style="left:114.5px;top:476.34px;font-size:10.0px;line-height:14.00px;color:#fff;transform:scaleX(0.8526);transform-origin:0 0;">Find Results 1</div>
<div class="a t" id="t51" style="left:178.5px;top:476.34px;font-size:10.0px;line-height:14.00px;color:#fff;transform:scaleX(0.8724);transform-origin:0 0;">Find Symbol Results</div>
<div class="a t" id="t52" style="left:268.5px;top:476.34px;font-size:10.0px;line-height:14.00px;color:#fff;transform:scaleX(0.8828);transform-origin:0 0;">Package Manager Console</div>
<div class="a t" id="t53" style="left:384.0px;top:476.34px;font-size:10.0px;line-height:14.00px;color:#fff;transform:scaleX(0.9181);transform-origin:0 0;">Web Publish Activity</div>
<div class="a t" id="t54" style="left:-11.8px;top:497.84px;font-size:10.0px;line-height:14.00px;color:#fff;transform:scaleX(0.8061);transform-origin:0 0;">Ready</div>
<div class="a t" id="t55" style="left:528.0px;top:497.84px;font-size:10.0px;line-height:14.00px;color:#fff;transform:scaleX(0.8218);transform-origin:0 0;">Ln 3</div>
<div class="a t" id="t56" style="left:598.0px;top:497.84px;font-size:10.0px;line-height:14.00px;color:#fff;transform:scaleX(0.8990);transform-origin:0 0;">Col 7</div>
<div class="a t" id="t57" style="left:668.0px;top:497.84px;font-size:10.0px;line-height:14.00px;color:#fff;transform:scaleX(0.8757);transform-origin:0 0;">Ch 7</div>
<div class="a t" id="t58" style="left:559.0px;top:457.84px;font-size:10.0px;line-height:14.00px;color:#1e1e1e;transform:scaleX(0.8992);transform-origin:0 0;">Solutio...</div>
<div class="a t" id="t59" style="left:606.0px;top:457.84px;font-size:10.0px;line-height:14.00px;color:#fff;transform:scaleX(0.8402);transform-origin:0 0;">Team E...</div>
<div class="a t" id="t60" style="left:651.5px;top:457.84px;font-size:10.0px;line-height:14.00px;color:#fff;transform:scaleX(0.7725);transform-origin:0 0;">Server E...</div>
<div class="a t" id="t61" style="left:699.0px;top:457.84px;font-size:10.0px;line-height:14.00px;color:#fff;transform:scaleX(0.91);transform-origin:0 0;">Class View</div>
<div class="a t" id="t62" style="left:7.5px;top:456.04px;font-size:10.0px;line-height:14.00px;color:#1e1e1e;transform:scaleX(0.8679);transform-origin:0 0;">Source</div>
<div class="a t" id="t63" style="left:76.0px;top:456.04px;font-size:10.0px;line-height:14.00px;color:#1e1e1e;transform:scaleX(0.9157);transform-origin:0 0;">&lt;html&gt;</div>
<div class="a t" id="t64" style="left:113.0px;top:456.04px;font-size:10.0px;line-height:14.00px;color:#1e1e1e;transform:scaleX(0.8840);transform-origin:0 0;">&lt;head&gt;</div>
<div class="a t" id="t65" style="left:-13.5px;top:440.04px;font-size:10.0px;line-height:14.00px;color:#1e1e1e;letter-spacing:-0.072px;">100 %</div>
</body></html>
